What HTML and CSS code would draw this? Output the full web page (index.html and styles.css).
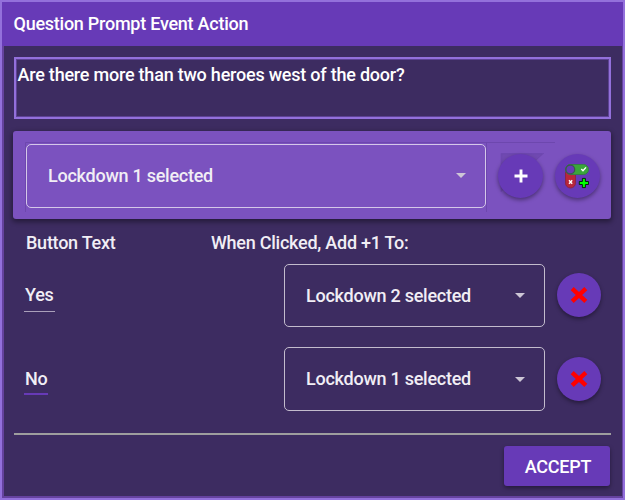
FILE: index.html
```html
<!DOCTYPE html>
<html lang="en">
<head>
<meta charset="utf-8">
<title>Question Prompt Event Action</title>
<link rel="stylesheet" href="styles.css">
</head>
<body>
<div class="dialog">
  <header class="title">Question Prompt Event Action</header>
  <main class="body">
    <div class="question">Are there more than two heroes west of the door?</div>
    <section class="panel">
      <svg class="edges" width="598" height="88" viewBox="0 0 598 88"><path d="M12.5 81V11.5H542M473.5 11.5V81" fill="none" stroke="#6d47ae"/><path d="M488 61V22.5h43M489 23h40l-10 10h-30z" fill="#7049b1" stroke="#6d47ae" stroke-width=".6"/></svg>
      <div class="select select-wide"><span>Lockdown 1 selected</span><i class="arrow"></i></div>
      <button class="fab" aria-label="Add"><svg width="14" height="14" viewBox="0 0 14 14"><path d="M7 .5v13M.5 7h13" stroke="#fff" stroke-width="2.9"/></svg></button>
      <button class="fab" aria-label="Add toggle">
        <svg class="toggle" width="26" height="26" viewBox="0 0 26 26">
          <path d="M1.5 9v11a5 5 0 0 0 10 0V9z" fill="#b8263b" stroke="#8b2447"/>
          <rect x="1.5" y="1.5" width="23" height="10" rx="5" fill="#3aa63a" stroke="#357c48"/>
          <circle cx="6.3" cy="6.5" r="4.4" fill="#673ab7" stroke="#3c5550" stroke-width="1.3"/>
          <path d="M17.3 6l1.7 1.8 3-3.4" fill="none" stroke="#fff" stroke-width="1.4"/>
          <path d="M5 17.3l3.2 3.4M8.2 17.3L5 20.7" stroke="#fff" stroke-width="1.4"/>
          <path d="M18.4 15.4h3v3.1h3.1v3h-3.1v3.1h-3v-3.1h-3.1v-3h3.1z" fill="#0f0" stroke="#06220c"/>
        </svg>
      </button>
    </section>
    <div class="headings"><span>Button Text</span><span>When Clicked, Add +1 To:</span></div>
    <div class="row">
      <div class="field"><span class="value yes">Yes</span></div>
      <div class="select"><span>Lockdown 2 selected</span><i class="arrow"></i></div>
      <button class="fab" aria-label="Remove"><svg width="18" height="18" viewBox="0 0 18 18"><path d="M2.2 2.7l13.6 12.6M15.8 2.7L2.2 15.3" stroke="red" stroke-width="4.4"/></svg></button>
    </div>
    <div class="row row-last">
      <div class="field"><span class="value no">No</span></div>
      <div class="select"><span>Lockdown 1 selected</span><i class="arrow"></i></div>
      <button class="fab" aria-label="Remove"><svg width="18" height="18" viewBox="0 0 18 18"><path d="M2.2 2.7l13.6 12.6M15.8 2.7L2.2 15.3" stroke="red" stroke-width="4.4"/></svg></button>
    </div>
    <footer class="footer"><button class="accept">ACCEPT</button></footer>
  </main>
</div>
</body>
</html>
```
FILE: styles.css
```css
* { box-sizing: border-box; }
body { margin: 0; font: 500 18px/24px Roboto, sans-serif; letter-spacing: -.25px; color: #f1eef5; }
button { font: inherit; letter-spacing: inherit; border: 0; padding: 0; color: #fff; }
.dialog { width: 625px; height: 500px; border: 2px solid #9370db; background: #3d2c61; overflow: hidden; }
.title { height: 44px; padding: 10px 11.5px; background: #673ab7; color: #fff; }
.body { height: 452px; padding: 11px 11px 0 9px; border: solid #65429f; border-width: 0 1px 2px 2px; }
.question { height: 62px; margin-left: 1px; padding: 4px 1.5px; border: 2px solid #9370db; box-shadow: inset 0 0 0 1px #5d4294; letter-spacing: -.22px; color: #fff; }
.panel { position: relative; display: flex; align-items: center; height: 88px; margin-top: 12px; padding: 1px 10px 0 13px; border-radius: 3px; background: #7b52bf; box-shadow: 0 2px 5px 1px rgba(0, 0, 0, .4); }
.edges { position: absolute; top: 0; left: 0; }
.panel .select, .fab { position: relative; }
.select { display: flex; align-items: center; justify-content: space-between; width: 261px; height: 63px; padding: 0 19px 0 21px; border: 1px solid #c3bccd; border-radius: 5px; }
.select-wide { width: 460px; height: 64px; border-color: #d5c8e9; }
.arrow { width: 0; height: 0; border: 5px solid transparent; border-top-color: #cdc6d6; border-bottom: 0; }
.fab { display: flex; align-items: center; justify-content: center; flex: none; width: 44px; height: 44px; margin-left: 12px; border-radius: 50%; background: #673ab7; box-shadow: 0 2px 4px rgba(0, 0, 0, .4); }
.panel .fab { width: 45px; }
.toggle { margin-right: 1px; }
.headings { display: grid; grid-template-columns: 185px 1fr; margin: 12px 0 9px 13px; }
.row { display: flex; align-items: center; height: 63px; }
.row .fab { margin-bottom: 1px; }
.row-last { height: 64px; margin-top: 20px; }
.row-last .select { height: 64px; }
.row-last .fab { margin-bottom: 0; }
.field { width: 271px; padding-left: 11px; }
.value { display: inline-block; height: 34px; padding: 5px 1px; }
.yes { margin-bottom: 2px; border-bottom: 1px solid #aaa0ba; }
.no { height: 33px; margin-bottom: 1px; padding-right: 1px; border-bottom: 2px solid #673ab7; }
.footer { display: flex; justify-content: flex-end; margin: 22px 0 0 1px; padding-top: 11px; border-top: 2px solid #9e9e9e; }
.accept { width: 106px; height: 40px; margin-right: 1px; padding: 1px 0 0 2px; border-radius: 3px; background: #673ab7; box-shadow: 0 2px 4px rgba(0, 0, 0, .4); }
```
